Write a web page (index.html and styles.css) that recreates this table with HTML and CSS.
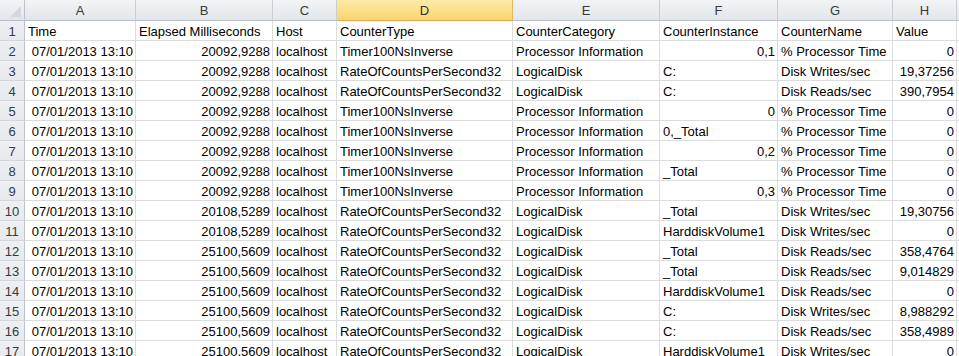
FILE: index.html
```html
<!DOCTYPE html>
<html>
<head>
<meta charset="utf-8">
<link rel="stylesheet" href="styles.css">
</head>
<body>
<div class="sheet">
  <div class="row head">
    <div class="corner"><span class="tri"></span></div>
    <div class="ch">A</div><div class="ch">B</div><div class="ch">C</div><div class="ch sel">D</div><div class="ch">E</div><div class="ch">F</div><div class="ch">G</div><div class="ch">H</div><div class="ch"></div>
  </div>
  <div class="row"><div class="rh">1</div><div class="c">Time</div><div class="c">Elapsed Milliseconds</div><div class="c">Host</div><div class="c">CounterType</div><div class="c">CounterCategory</div><div class="c">CounterInstance</div><div class="c">CounterName</div><div class="c">Value</div><div class="c"></div></div>
  <div class="row"><div class="rh">2</div><div class="c r">07/01/2013 13:10</div><div class="c r">20092,9288</div><div class="c">localhost</div><div class="c">Timer100NsInverse</div><div class="c">Processor Information</div><div class="c r">0,1</div><div class="c">% Processor Time</div><div class="c r">0</div><div class="c"></div></div>
  <div class="row"><div class="rh">3</div><div class="c r">07/01/2013 13:10</div><div class="c r">20092,9288</div><div class="c">localhost</div><div class="c">RateOfCountsPerSecond32</div><div class="c">LogicalDisk</div><div class="c">C:</div><div class="c">Disk Writes/sec</div><div class="c r">19,37256</div><div class="c"></div></div>
  <div class="row"><div class="rh">4</div><div class="c r">07/01/2013 13:10</div><div class="c r">20092,9288</div><div class="c">localhost</div><div class="c">RateOfCountsPerSecond32</div><div class="c">LogicalDisk</div><div class="c">C:</div><div class="c">Disk Reads/sec</div><div class="c r">390,7954</div><div class="c"></div></div>
  <div class="row"><div class="rh">5</div><div class="c r">07/01/2013 13:10</div><div class="c r">20092,9288</div><div class="c">localhost</div><div class="c">Timer100NsInverse</div><div class="c">Processor Information</div><div class="c r">0</div><div class="c">% Processor Time</div><div class="c r">0</div><div class="c"></div></div>
  <div class="row"><div class="rh">6</div><div class="c r">07/01/2013 13:10</div><div class="c r">20092,9288</div><div class="c">localhost</div><div class="c">Timer100NsInverse</div><div class="c">Processor Information</div><div class="c">0,_Total</div><div class="c">% Processor Time</div><div class="c r">0</div><div class="c"></div></div>
  <div class="row"><div class="rh">7</div><div class="c r">07/01/2013 13:10</div><div class="c r">20092,9288</div><div class="c">localhost</div><div class="c">Timer100NsInverse</div><div class="c">Processor Information</div><div class="c r">0,2</div><div class="c">% Processor Time</div><div class="c r">0</div><div class="c"></div></div>
  <div class="row"><div class="rh">8</div><div class="c r">07/01/2013 13:10</div><div class="c r">20092,9288</div><div class="c">localhost</div><div class="c">Timer100NsInverse</div><div class="c">Processor Information</div><div class="c">_Total</div><div class="c">% Processor Time</div><div class="c r">0</div><div class="c"></div></div>
  <div class="row"><div class="rh">9</div><div class="c r">07/01/2013 13:10</div><div class="c r">20092,9288</div><div class="c">localhost</div><div class="c">Timer100NsInverse</div><div class="c">Processor Information</div><div class="c r">0,3</div><div class="c">% Processor Time</div><div class="c r">0</div><div class="c"></div></div>
  <div class="row"><div class="rh">10</div><div class="c r">07/01/2013 13:10</div><div class="c r">20108,5289</div><div class="c">localhost</div><div class="c">RateOfCountsPerSecond32</div><div class="c">LogicalDisk</div><div class="c">_Total</div><div class="c">Disk Writes/sec</div><div class="c r">19,30756</div><div class="c"></div></div>
  <div class="row"><div class="rh">11</div><div class="c r">07/01/2013 13:10</div><div class="c r">20108,5289</div><div class="c">localhost</div><div class="c">RateOfCountsPerSecond32</div><div class="c">LogicalDisk</div><div class="c">HarddiskVolume1</div><div class="c">Disk Writes/sec</div><div class="c r">0</div><div class="c"></div></div>
  <div class="row"><div class="rh">12</div><div class="c r">07/01/2013 13:10</div><div class="c r">25100,5609</div><div class="c">localhost</div><div class="c">RateOfCountsPerSecond32</div><div class="c">LogicalDisk</div><div class="c">_Total</div><div class="c">Disk Reads/sec</div><div class="c r">358,4764</div><div class="c"></div></div>
  <div class="row"><div class="rh">13</div><div class="c r">07/01/2013 13:10</div><div class="c r">25100,5609</div><div class="c">localhost</div><div class="c">RateOfCountsPerSecond32</div><div class="c">LogicalDisk</div><div class="c">_Total</div><div class="c">Disk Reads/sec</div><div class="c r">9,014829</div><div class="c"></div></div>
  <div class="row"><div class="rh">14</div><div class="c r">07/01/2013 13:10</div><div class="c r">25100,5609</div><div class="c">localhost</div><div class="c">RateOfCountsPerSecond32</div><div class="c">LogicalDisk</div><div class="c">HarddiskVolume1</div><div class="c">Disk Reads/sec</div><div class="c r">0</div><div class="c"></div></div>
  <div class="row"><div class="rh">15</div><div class="c r">07/01/2013 13:10</div><div class="c r">25100,5609</div><div class="c">localhost</div><div class="c">RateOfCountsPerSecond32</div><div class="c">LogicalDisk</div><div class="c">C:</div><div class="c">Disk Writes/sec</div><div class="c r">8,988292</div><div class="c"></div></div>
  <div class="row"><div class="rh">16</div><div class="c r">07/01/2013 13:10</div><div class="c r">25100,5609</div><div class="c">localhost</div><div class="c">RateOfCountsPerSecond32</div><div class="c">LogicalDisk</div><div class="c">C:</div><div class="c">Disk Reads/sec</div><div class="c r">358,4989</div><div class="c"></div></div>
  <div class="row"><div class="rh">17</div><div class="c r">07/01/2013 13:10</div><div class="c r">25100,5609</div><div class="c">localhost</div><div class="c">RateOfCountsPerSecond32</div><div class="c">LogicalDisk</div><div class="c">HarddiskVolume1</div><div class="c">Disk Writes/sec</div><div class="c r">0</div><div class="c"></div></div>
</div>
</body>
</html>
```

FILE: styles.css
```css
html, body {
  margin: 0;
  padding: 0;
  background: #ffffff;
  overflow: hidden;
}
.sheet {
  width: 959px;
  height: 356px;
  overflow: hidden;
  font-family: "Liberation Sans", Arial, sans-serif;
  font-size: 13px;
  color: #000;
}
.row {
  display: grid;
  grid-template-columns: 25px 111px 137px 64px 176px 147px 118px 115px 64px 100px;
  height: 20px;
  width: 1057px;
}
.row.head {
  height: 21px;
}
.row > div {
  box-sizing: border-box;
  border-right: 1px solid #dadcdd;
  border-bottom: 1px solid #dadcdd;
  white-space: nowrap;
  overflow: hidden;
  line-height: 21px;
}
.c {
  padding: 0 3px;
}
.c.r {
  text-align: right;
  padding-right: 2px;
}
.row > .rh {
  background: linear-gradient(#eef0f3, #e6e9ed);
  border-right: 1px solid #bcc2c9;
  border-bottom: 1px solid #d3d7dc;
  color: #3a3a3a;
  text-align: center;
}
.row.head > div {
  background: linear-gradient(#f2f4f6, #e2e6ea);
  border-right: 1px solid #c9ced4;
  border-bottom: 1px solid #b8bec6;
  color: #3a3a3a;
  text-align: center;
  line-height: 21px;
}
.row.head > .ch.sel {
  background: linear-gradient(#fdeaa8, #f9d46e);
  border-right: 1px solid #e3b85c;
  border-bottom: 1px solid #f0a94a;
  color: #333;
}
.row.head > .corner {
  position: relative;
  border-right: 1px solid #bcc2c9;
}
.tri {
  position: absolute;
  right: 3px;
  bottom: 3px;
  width: 0;
  height: 0;
  border-left: 11px solid transparent;
  border-bottom: 11px solid #d3d7dd;
}
```
